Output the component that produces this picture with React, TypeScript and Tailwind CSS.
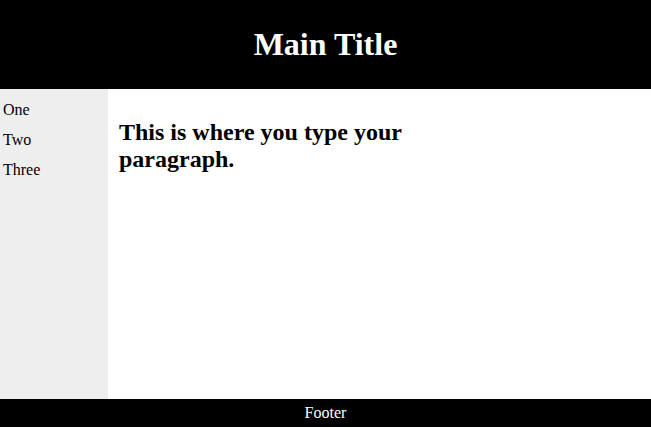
const LINKS = ["One", "Two", "Three"];

export default function App() {
  return (
    <div className="flex h-[428px] w-[651px] flex-col bg-white font-['Liberation_Serif',serif] text-black">
      {/* Header */}
      <header className="flex h-[89px] shrink-0 items-center justify-center bg-black">
        <h1 className="text-[32px] font-bold leading-[37px] text-white">Main Title</h1>
      </header>

      <div className="flex min-h-0 flex-1">
        {/* Sidebar */}
        <nav className="w-[108px] shrink-0 bg-[#eeeeee] pl-[3px] pt-[12px]">
          <ul className="flex flex-col gap-[12px]">
            {LINKS.map((link) => (
              <li key={link} className="text-[16px] leading-[18px]">
                {link}
              </li>
            ))}
          </ul>
        </nav>

        {/* Content */}
        <main className="flex-1 pl-[11px] pt-[30px]">
          <h2 className="w-[300px] text-[24px] font-bold leading-[27px]">
            This is where you type your paragraph.
          </h2>
        </main>
      </div>

      {/* Footer */}
      <footer className="flex h-[28px] shrink-0 items-center justify-center bg-black">
        <span className="text-[16px] leading-[18px] text-white">Footer</span>
      </footer>
      <div className="h-px shrink-0 bg-white" />
    </div>
  );
}
